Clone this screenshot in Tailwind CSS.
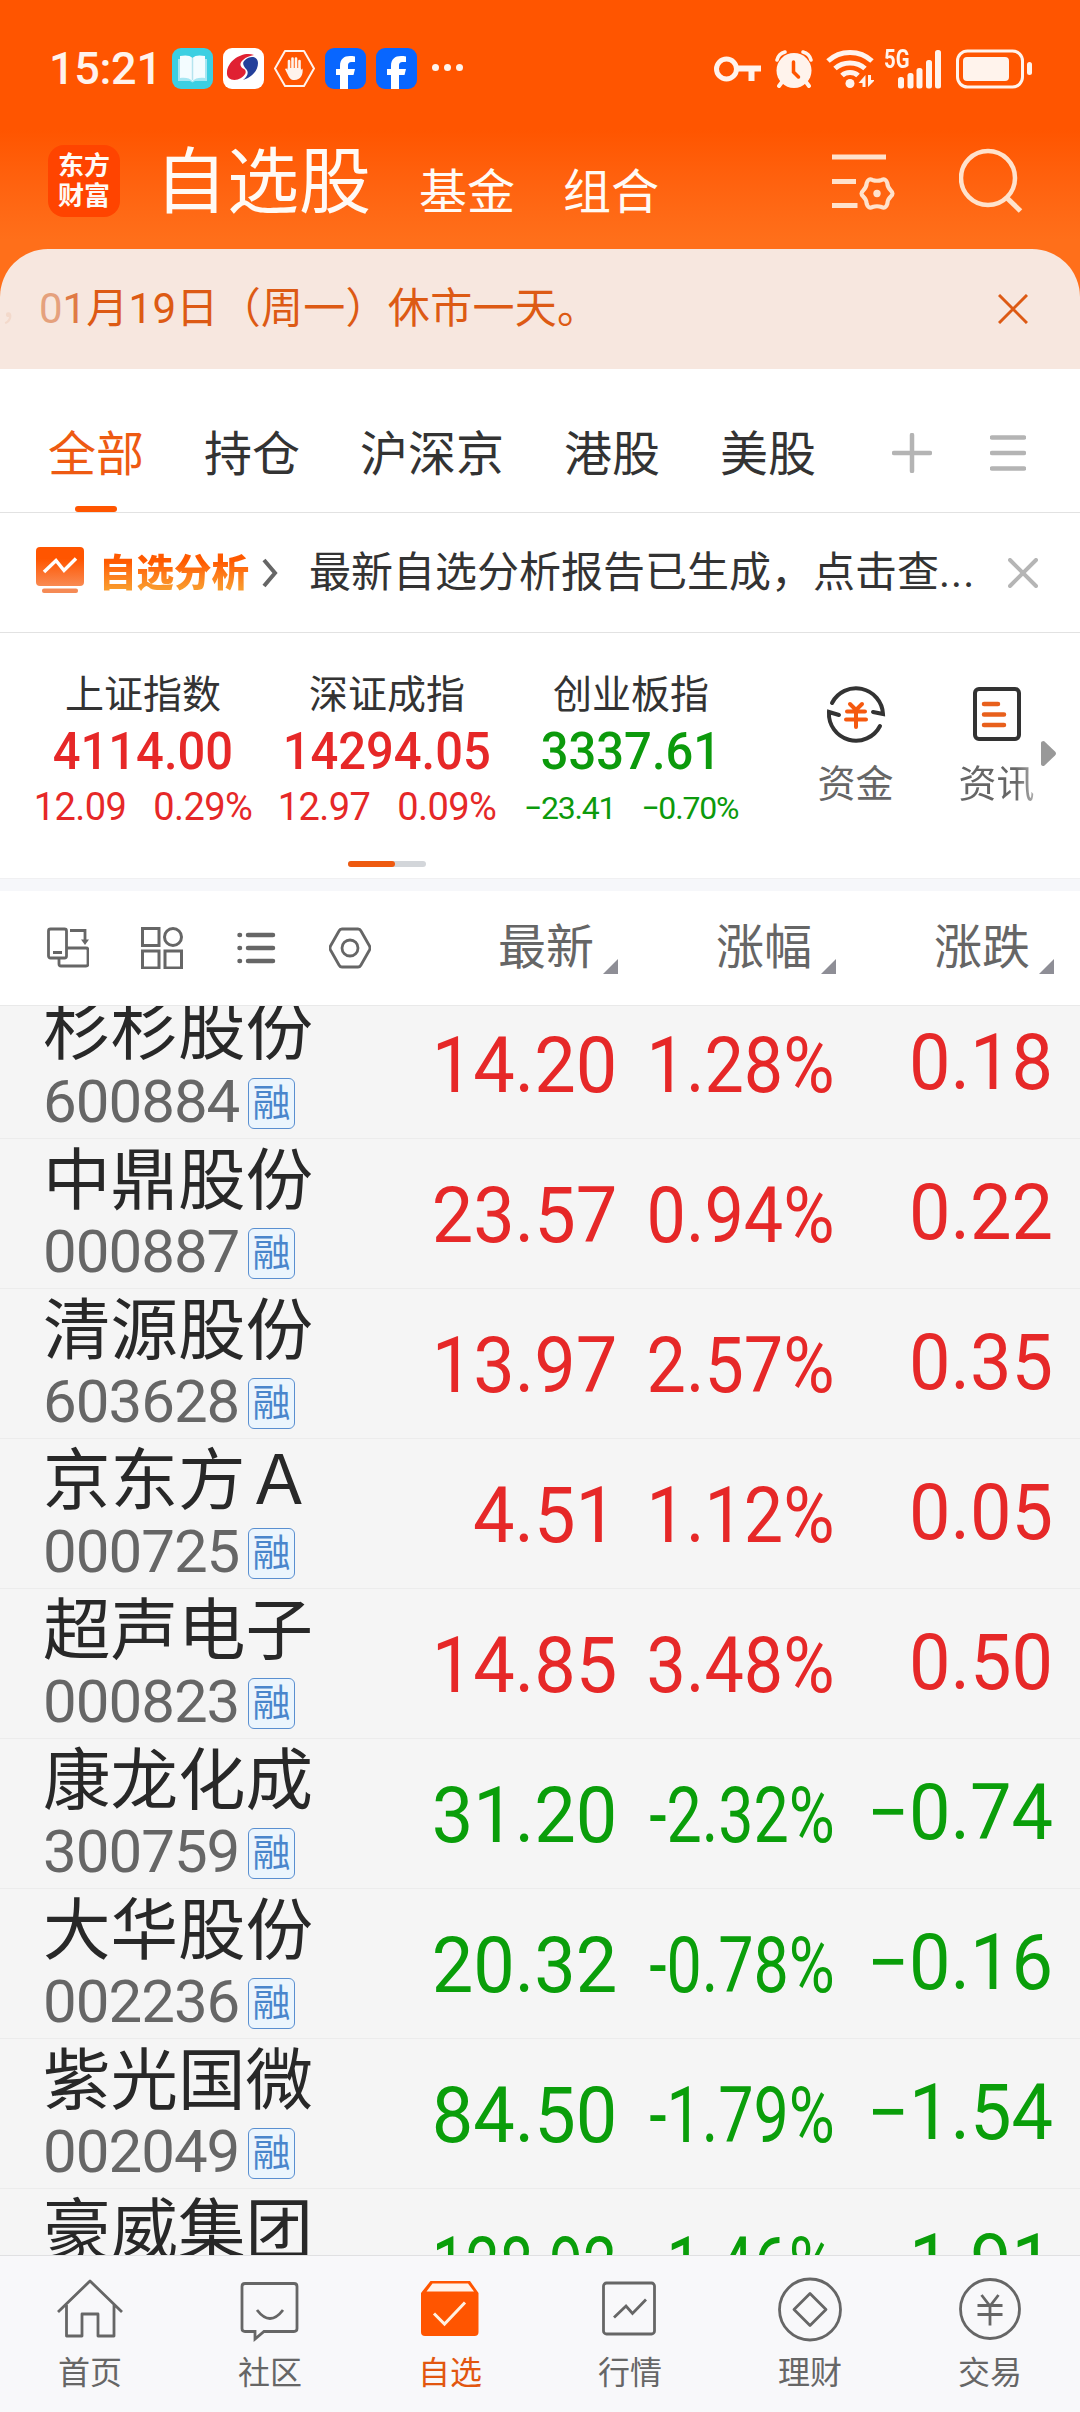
<!DOCTYPE html>
<html lang="zh-CN">
<head>
    <meta charset="UTF-8">
    <meta name="viewport" content="width=device-width, initial-scale=1.0">
    <title>自选股 | 东方财富</title>
    <script src="https://cdn.jsdelivr.net/npm/@tailwindcss/browser@4"></script>
</head>
<body class="w-[1080px] h-[2412px] overflow-hidden flex flex-col bg-white font-['Roboto','Noto_Sans_CJK_SC',sans-serif] text-[#333333] whitespace-nowrap">
    <!-- Header -->
    <header class="shrink-0 bg-linear-to-b from-[#ff5500] from-[130px] to-[#ff6f1a] to-[240px]">
        <!-- Status Bar -->
        <div class="h-[137px] flex items-center text-[#fff3ec]">
            <div class="w-[172px] pl-[49px] text-[45px] leading-none font-medium tracking-[-0.3px]">15:21</div>
            <div class="flex items-center gap-[10px]">
                <svg class="w-[41px] h-[41px]" viewBox="0 0 41 41">
                    <rect width="41" height="41" rx="9" fill="#3ccfe2"/>
                    <path d="M6 11h29v22H23l-2.500 1.500L18 33H6z" fill="#a5e6f2"/>
                    <path d="M8 8c5-1 10-1 12.500 2C23 7 28 7 33 8v22c-5-1-10 0-12.500 3C18 30 13 29 8 30z" fill="#f3fcff"/>
                    <path d="M20.500 10v22" stroke="#b5e4ef" stroke-width="1.500"/>
                </svg>
                <svg class="w-[41px] h-[41px]" viewBox="0 0 41 41">
                    <rect width="41" height="41" rx="9" fill="#fff"/>
                    <path d="M31 7C20 3 5 12 4 24c-1 8 8 10 14 6 5-3 6-7 3-9-4-2-5-6-1-9 3-3 7-4 11-5z" fill="#e02132"/>
                    <path d="M22 12c5-5 13-4 13 3 0 8-7 15-15 17 5-4 6-8 3-11-3-4-4-6-1-9z" fill="#24409a"/>
                </svg>
                <svg class="w-[41px] h-[41px]" viewBox="0 0 41 41" fill="none" stroke="currentColor" stroke-linecap="round">
                    <path d="M11 3h19l10 17.500L30 38H11L1 20.500z" stroke-width="2" stroke-linejoin="round"/>
                    <path d="M15 23V13M18.500 21V10.500M22 21V10.500M25.500 23V13" stroke-width="2.600"/>
                    <path d="M13.700 20h13.100v2l1.700-1.500c1 6-2 11.500-8 11.500-4 0-5-2-7-6l-2.500-5c1-1 2-.5 2.700 1z" fill="currentColor" stroke="none"/>
                </svg>
                <svg class="w-[41px] h-[41px]" viewBox="0 0 41 41">
                    <rect width="41" height="41" rx="9" fill="#0866ff"/>
                    <path d="M15 41V27h-4v-6h4v-3c0-7 4-10 10-10 2 0 3 0 5 .5V14h-3c-3 0-4 1-4 4v3h7l-1.500 6H23v14z" fill="#fff"/>
                </svg>
                <svg class="w-[41px] h-[41px]" viewBox="0 0 41 41">
                    <rect width="41" height="41" rx="9" fill="#0866ff"/>
                    <path d="M15 41V27h-4v-6h4v-3c0-7 4-10 10-10 2 0 3 0 5 .5V14h-3c-3 0-4 1-4 4v3h7l-1.500 6H23v14z" fill="#fff"/>
                </svg>
            </div>
            <div class="flex gap-[5px] ml-[15px] -mt-[2px]">
                <span class="w-[7px] h-[7px] rounded-full bg-current"></span>
                <span class="w-[7px] h-[7px] rounded-full bg-current"></span>
                <span class="w-[7px] h-[7px] rounded-full bg-current"></span>
            </div>
            <div class="flex items-center ml-auto pr-[47px]">
                <!-- key -->
                <svg class="w-[48px] h-[26px]" viewBox="0 0 48 26" fill="none" stroke="currentColor">
                    <circle cx="12.500" cy="13" r="10" stroke-width="5"/>
                    <path d="M23 12.500h24M37.500 13v12" stroke-width="6"/>
                </svg>
                <!-- alarm -->
                <svg class="w-[38px] h-[38px] ml-[13px]" viewBox="0 0 38 38" fill="none" stroke="currentColor" stroke-linecap="round">
                    <circle cx="19" cy="20.500" r="17.500" fill="currentColor" stroke="none"/>
                    <path d="M2 10c1-4 4-7 8-8M36 10c-1-4-4-7-8-8" stroke-width="3.500"/>
                    <path d="M7 32l-3 4M31 32l3 4" stroke-width="4"/>
                    <path d="M18.500 12v10l5 5" stroke="#ff5500" stroke-width="3.500"/>
                </svg>
                <!-- wifi -->
                <svg class="w-[48px] h-[40px] ml-[13px]" viewBox="0 0 48 40" fill="none" stroke="currentColor">
                    <path d="M2 12c12-11.500 32-11.500 44 0M9 19.500c8-7.500 22-7.500 30 0M16 26.500c4-4 12-4 16 0" stroke-width="5"/>
                    <circle cx="24" cy="34.500" r="4.500" fill="currentColor" stroke="none"/>
                    <path d="M39.500 38V26l-7 8h4v4zM42 26v12l7-7h-4v-5z" fill="currentColor" stroke="none"/>
                </svg>
                <!-- signal -->
                <div class="relative w-[58px] h-[40px] ml-[10px]">
                    <span class="absolute left-0 top-0 text-[26px] leading-[20px] font-bold origin-left scale-x-[.78]">5G</span>
                    <svg class="w-[58px] h-[40px]" viewBox="0 0 58 40" fill="currentColor">
                        <rect x="14" y="28" width="6" height="11.500" rx="2.500"/>
                        <rect x="23.500" y="24" width="6" height="15.500" rx="2.500"/>
                        <rect x="32.500" y="19" width="6" height="20.500" rx="2.500"/>
                        <rect x="42" y="11" width="6" height="28.500" rx="2.500"/>
                        <rect x="51" y="1" width="6" height="38.500" rx="2.500"/>
                    </svg>
                </div>
                <!-- battery -->
                <svg class="w-[77px] h-[40px] ml-[14px]" viewBox="0 0 77 40" fill="currentColor">
                    <rect x="1.500" y="2" width="65" height="36" rx="10" fill="none" stroke="currentColor" stroke-width="3"/>
                    <rect x="7" y="8" width="46" height="24" rx="4"/>
                    <rect x="71" y="13" width="5" height="13" rx="2.500"/>
                </svg>
            </div>
        </div>

        <!-- Title Bar -->
        <div class="h-[112px] pb-[24px] pl-[48px] pr-[57px] flex items-center text-[#fffaf5]">
            <div class="w-[72px] h-[72px] rounded-[16px] bg-[#ff4400] flex flex-col items-center justify-center text-[26px] leading-[30px] font-bold">
                <span>东方</span>
                <span>财富</span>
            </div>
            <h1 class="ml-[35px] mt-[4px] text-[72px] leading-[80px]">自选股</h1>
            <a href="#" class="ml-[48px] mt-[24px] text-[48px] leading-[56px]">基金</a>
            <a href="#" class="ml-[48px] mt-[24px] text-[48px] leading-[56px]">组合</a>
            <svg class="w-[64px] h-[60px] ml-auto text-[#ffe2cc]" viewBox="0 0 64 60" fill="none" stroke="currentColor" stroke-width="5">
                <path d="M0 6h54M0 30.500h24M0 54.500h25.500"/>
                <g transform="translate(45 42.500) scale(.92)">
                    <path d="M15.200 3Q11.400 6.600 11.200 11.200Q9.500 16.800 5 14.700Q0 13-5 14.700Q-9.500 16.800-11.200 11.200Q-11.400 6.600-15.200 3Q-18.500 0-15.200-3Q-11.400-6.600-11.200-11.200Q-9.500-16.800-5-14.700Q0-13 5-14.700Q9.500-16.800 11.200-11.200Q11.400-6.600 15.200-3Q18.500 0 15.200 3z" stroke-width="4.500"/>
                    <circle r="4" fill="currentColor" stroke="none"/>
                </g>
            </svg>
            <svg class="w-[64px] h-[66px] ml-[63px] text-[#ffe2cc]" viewBox="0 0 64 66" fill="none" stroke="currentColor" stroke-width="4.500">
                <circle cx="29" cy="30" r="27"/>
                <path d="M47.500 49.500l14 13.500" stroke-width="5"/>
            </svg>
        </div>

        <!-- Notice -->
        <div class="h-[120px] rounded-t-[48px] bg-[#f7e7df] flex items-center pr-[52px] text-[#dd5a14]">
            <div class="w-[39px] text-[42px] leading-[48px] text-[#f3d9cb] flex overflow-hidden"><span class="-ml-[4px] scale-[.8]">，</span></div>
            <p class="text-[42px] leading-[48px] -mt-[1px]"><span class="text-[#e5a17d]">0</span><span class="text-[#e07a45]">1</span><span class="tracking-[0.3px]">月19日（周一）休市一天。</span></p>
            <svg class="w-[30px] h-[30px] ml-auto" viewBox="0 0 30 30" stroke="currentColor" stroke-width="3">
                <path d="M1 1l28 28M29 1L1 29"/>
            </svg>
        </div>
    </header>

    <!-- Group Tabs -->
    <nav class="shrink-0 h-[144px] border-b border-[#e2e2e2] flex pl-[48px] pr-[54px] text-[48px] leading-[56px]">
        <ul class="flex gap-[60px]">
            <li class="relative pt-[58px] text-[#ee5a12]">全部
                <span class="absolute left-[27px] bottom-0 w-[42px] h-[6px] rounded-full bg-[#ff5500]"></span>
            </li>
            <li class="pt-[58px]">持仓</li>
            <li class="pt-[58px]">沪深京</li>
            <li class="pt-[58px]">港股</li>
            <li class="pt-[58px]">美股</li>
        </ul>
        <div class="flex items-center ml-auto pt-[24px] gap-[58px] text-[#b4b4b4]">
            <svg class="w-[40px] h-[40px]" viewBox="0 0 40 40" fill="none" stroke="currentColor" stroke-width="4.500" stroke-linecap="round">
                <path d="M20 2v36M2 20h36"/>
            </svg>
            <svg class="w-[36px] h-[40px]" viewBox="0 0 36 40" fill="none" stroke="currentColor" stroke-width="4.500" stroke-linecap="round">
                <path d="M2 4.500h32M2 20h32M2 35.500h32"/>
            </svg>
        </div>
    </nav>

    <!-- Analysis Banner -->
    <section class="shrink-0 h-[120px] border-b border-[#e2e2e2] flex items-center pl-[36px] pr-[42px]">
        <svg class="w-[48px] h-[48px] -mt-[6px]" viewBox="0 0 48 48">
            <defs>
                <linearGradient id="chart" x1="0" y1="0" x2="0" y2="1">
                    <stop offset=".3" stop-color="#ff5500"/>
                    <stop offset="1" stop-color="#f98a52"/>
                </linearGradient>
            </defs>
            <rect width="48" height="39" rx="4" y="1" fill="url(#chart)"/>
            <rect x="6" y="42.500" width="36" height="4.500" rx="2" fill="#f58a55"/>
            <path d="M8 26L20 14.500l8 10L40 12.500" fill="none" stroke="#fff" stroke-width="3.500"/>
        </svg>
        <b class="ml-[15px] text-[37.5px] leading-[44px] font-black bg-linear-to-b from-[#ff5a00] from-25% to-[#f99a2c] to-85% bg-clip-text text-transparent">自选分析</b>
        <svg class="w-[18px] h-[30px] ml-[12px]" viewBox="0 0 18 30" fill="none" stroke="#666" stroke-width="4">
            <path d="M3 2l11 13L3 28"/>
        </svg>
        <p class="ml-[30px] text-[42px] leading-[50px]">最新自选分析报告已生成，点击查<span class="tracking-[1px]">...</span></p>
        <svg class="w-[30px] h-[30px] ml-auto" viewBox="0 0 30 30" stroke="#b5b5b5" stroke-width="4" stroke-linecap="round">
            <path d="M2 2l26 26M28 2L2 28"/>
        </svg>
    </section>

    <!-- Index Quotes -->
    <section class="relative shrink-0 h-[246px] flex pl-[21px] border-b border-[#f0f0f2]">
        <div class="w-[244px] pt-[36px] flex flex-col items-center text-[#e62828]">
            <h2 class="text-[39px] leading-[52px] text-[#333333]">上证指数</h2>
            <div class="mt-[3px] text-[52px] leading-[56px] font-medium scale-x-[.94]">4114.00</div>
            <div class="mt-[7px] flex gap-[27px] text-[38px] leading-[40px] tracking-[-0.6px]"><span>12.09</span><span>0.29%</span></div>
        </div>
        <div class="w-[244px] pt-[36px] flex flex-col items-center text-[#e62828]">
            <h2 class="text-[39px] leading-[52px] text-[#333333]">深证成指</h2>
            <div class="mt-[3px] text-[52px] leading-[56px] font-medium scale-x-[.94]">14294.05</div>
            <div class="mt-[7px] flex gap-[27px] text-[38px] leading-[40px] tracking-[-0.6px]"><span>12.97</span><span>0.09%</span></div>
        </div>
        <div class="w-[244px] pt-[36px] flex flex-col items-center text-[#0c9a0c]">
            <h2 class="text-[39px] leading-[52px] text-[#333333]">创业板指</h2>
            <div class="mt-[3px] text-[52px] leading-[56px] font-medium scale-x-[.94]">3337.61</div>
            <div class="mt-[8px] flex gap-[26px] text-[32px] leading-[40px] tracking-[-1.2px]"><span>−23.41</span><span>−0.70%</span></div>
        </div>
        <div class="w-[141px] ml-[32px] pt-[50px] flex flex-col items-center text-[#666666]">
            <svg class="w-[60px] h-[62px]" viewBox="0 0 60 62" fill="none" stroke="#333" stroke-width="4" stroke-linecap="round">
                <path d="M6 20A27 27 0 0 1 57 31l-10-2M54 43A27 27 0 0 1 3 29l10 3"/>
                <path d="M24 21l6 6 6-6M21 28.500h18M20 36.500h20M30 28v16" stroke="#f5590f"/>
            </svg>
            <span class="mt-[15px] text-[38px] leading-[48px]">资金</span>
        </div>
        <div class="w-[141px] pt-[50px] flex flex-col items-center">
            <svg class="w-[60px] h-[62px]" viewBox="0 0 60 62" fill="none" stroke="#333" stroke-width="4">
                <rect x="8" y="6" width="44" height="50" rx="4"/>
                <path d="M17 21h14M17 31.500h20M17 42h20" stroke="#e8601c" stroke-width="4.500" stroke-linecap="round"/>
            </svg>
            <span class="mt-[15px] text-[38px] leading-[48px] bg-linear-to-r from-[#666666] from-75% to-[#b0b0b0] bg-clip-text text-transparent">资讯</span>
        </div>
        <svg class="absolute left-[1041px] top-[108px] w-[15px] h-[25px]" viewBox="0 0 15 25" fill="#999">
            <path d="M0 2q0-2 3-2l11 10.500q2 2 0 4L3 25q-3 0-3-2z"/>
        </svg>
        <div class="absolute left-[348px] top-[228px] w-[78px] h-[6px] rounded-full bg-[#d3d6da]">
            <div class="w-[47px] h-[6px] rounded-full bg-[#ee5a10]"></div>
        </div>
    </section>
    <div class="shrink-0 h-[12px] bg-[#f6f7fa]"></div>

    <!-- List Header -->
    <section class="shrink-0 h-[115px] border-b border-[#e9e9e9] flex items-center text-[#666666]">
        <div class="w-[378px] pl-[47px] flex gap-[52px]">
            <svg class="w-[42px] h-[42px]" viewBox="0 0 42 42" fill="none" stroke="currentColor" stroke-width="2.800">
                <rect x="1.500" y="2" width="18" height="29" rx="2"/>
                <path d="M6 25.500h9M23 3.500h15V15M20 21h19q2 0 2 2v14q0 2-2 2H14q-2 0-2-2v-6"/>
                <path d="M34 12.500h8l-4 5.500z" fill="currentColor" stroke="none"/>
            </svg>
            <svg class="w-[42px] h-[42px]" viewBox="0 0 42 42" fill="none" stroke="currentColor" stroke-width="3">
                <rect x="1.500" y="1.500" width="16.500" height="17"/>
                <circle cx="32" cy="10" r="8.500"/>
                <rect x="1.500" y="24" width="16.500" height="17"/>
                <rect x="24" y="24" width="16.500" height="17"/>
            </svg>
            <svg class="w-[42px] h-[42px]" viewBox="0 0 42 42" fill="none" stroke="currentColor" stroke-width="4.500" stroke-linecap="round">
                <path d="M13 8h25M13 21h25M13 34h25M4.500 8h.5M4.500 21h.5M4.500 34h.5"/>
            </svg>
            <svg class="w-[42px] h-[42px]" viewBox="0 0 42 42" fill="none" stroke="currentColor" stroke-width="2.800">
                <path d="M13 2h16q2 0 3 2l8.500 15q1 2 0 4L32 38q-1 2-3 2H13q-2 0-3-2L1.500 23q-1-2 0-4L10 4q1-2 3-2z"/>
                <circle cx="21" cy="21" r="8"/>
            </svg>
        </div>
        <div class="w-[240px] flex justify-end items-end text-[48px] leading-[56px]">最新
            <svg class="w-[15px] h-[15px] ml-[9px] mb-[2px]" viewBox="0 0 15 15" fill="#8e8e96"><path d="M15 0v15H0z"/></svg>
        </div>
        <div class="w-[218px] flex justify-end items-end text-[48px] leading-[56px]">涨幅
            <svg class="w-[15px] h-[15px] ml-[9px] mb-[2px]" viewBox="0 0 15 15" fill="#8e8e96"><path d="M15 0v15H0z"/></svg>
        </div>
        <div class="w-[218px] flex justify-end items-end text-[48px] leading-[56px]">涨跌
            <svg class="w-[15px] h-[15px] ml-[9px] mb-[2px]" viewBox="0 0 15 15" fill="#8e8e96"><path d="M15 0v15H0z"/></svg>
        </div>
    </section>

    <!-- Stock List -->
    <main class="flex-1 min-h-0 overflow-hidden bg-[#f5f5f5]">
        <div id="stockList" class="-mt-[17px]"></div>
    </main>

    <!-- Bottom Navigation -->
    <footer class="shrink-0 h-[157px] border-t border-[#e0e0e2] bg-[#f8f8fa] grid grid-cols-6 text-[32px] leading-[40px] text-[#666666]">
        <a href="#" class="flex flex-col items-center pt-[20px]">
            <svg class="w-[66px] h-[66px]" viewBox="0 0 66 66" fill="none" stroke="currentColor" stroke-width="2.800">
                <path d="M1 36L33 5l32 31M9.500 29v31H25V38h16v22h16V29" stroke-linejoin="round"/>
            </svg>
            <span class="mt-[11px]">首页</span>
        </a>
        <a href="#" class="flex flex-col items-center pt-[20px]">
            <svg class="w-[66px] h-[66px]" viewBox="0 0 66 66" fill="none" stroke="currentColor" stroke-width="2.800">
                <path d="M8 7.500h49q3 0 3 3v42q0 3-3 3H27l-9 7.500v-7.500H8q-3 0-3-3v-42q0-3 3-3z"/>
                <path d="M20 34q13 17 26 0"/>
            </svg>
            <span class="mt-[11px]">社区</span>
        </a>
        <a href="#" class="flex flex-col items-center pt-[20px] text-[#e2560f]">
            <svg class="w-[66px] h-[66px]" viewBox="0 0 66 66">
                <path d="M4 17l9.500-12H53l8.500 12v39q0 4-4 4H8q-4 0-4-4z" fill="#ff5500"/>
                <path d="M9.500 15.500L15.500 7.500H51l6 8z" fill="#fff3ea"/>
                <path d="M17 37.500l10.500 10.500L48 26.500" fill="none" stroke="#fff0e0" stroke-width="3"/>
            </svg>
            <span class="mt-[11px]">自选</span>
        </a>
        <a href="#" class="flex flex-col items-center pt-[20px]">
            <svg class="w-[66px] h-[66px]" viewBox="0 0 66 66" fill="none" stroke="currentColor" stroke-width="2.800">
                <rect x="6.500" y="7" width="51" height="51" rx="3"/>
                <path d="M17 41.500L29 30l6.500 7.500L49 23.500"/>
            </svg>
            <span class="mt-[11px]">行情</span>
        </a>
        <a href="#" class="flex flex-col items-center pt-[20px]">
            <svg class="w-[66px] h-[66px]" viewBox="0 0 66 66" fill="none" stroke="currentColor" stroke-width="2.800">
                <circle cx="33" cy="33.500" r="30.500"/>
                <path d="M33 17.500l16 16-16 16-16-16z" stroke-linejoin="round"/>
            </svg>
            <span class="mt-[11px]">理财</span>
        </a>
        <a href="#" class="flex flex-col items-center pt-[20px]">
            <svg class="w-[66px] h-[66px]" viewBox="0 0 66 66" fill="none" stroke="currentColor" stroke-width="2.800">
                <circle cx="33" cy="33" r="29.500"/>
                <path d="M24.500 19l8.500 11 8.500-11M20.500 29.500h25M20.500 38.500h25M33 29v20.500"/>
            </svg>
            <span class="mt-[11px]">交易</span>
        </a>
    </footer>

    <script>
        const stocks = [
            { name: '杉杉股份', code: '600884', price: '14.20', percent: '1.28%', change: '0.18' },
            { name: '中鼎股份', code: '000887', price: '23.57', percent: '0.94%', change: '0.22' },
            { name: '清源股份', code: '603628', price: '13.97', percent: '2.57%', change: '0.35' },
            { name: '京东方Ａ', code: '000725', price: '4.51', percent: '1.12%', change: '0.05' },
            { name: '超声电子', code: '000823', price: '14.85', percent: '3.48%', change: '0.50' },
            { name: '康龙化成', code: '300759', price: '31.20', percent: '-2.32%', change: '−0.74' },
            { name: '大华股份', code: '002236', price: '20.32', percent: '-0.78%', change: '−0.16' },
            { name: '紫光国微', code: '002049', price: '84.50', percent: '-1.79%', change: '−1.54' },
            { name: '豪威集团', code: '603501', price: '128.92', percent: '-1.46%', change: '−1.91' }
        ];

        document.getElementById('stockList').innerHTML = stocks.map(stock => {
            const falling = stock.percent.startsWith('-');
            const color = falling ? 'text-[#0a9e0a]' : 'text-[#e62828]';
            // long values are squeezed to stay inside their column
            const priceScale = stock.price.length > 5 ? 'scale-x-[.78]' : 'scale-x-[.96]';
            const percentScale = falling ? 'scale-x-[.815]' : 'scale-x-[.91]';
            return `
                <div class="h-[150px] border-b border-[#ececec] flex items-center text-[77px] leading-[90px] ${color}">
                    <div class="w-[378px] h-full pl-[43px]">
                        <div class="h-[84px] text-[67.5px] leading-[83px] text-[#282828]">${stock.name}</div>
                        <div class="h-[58px] flex items-center text-[60px] leading-[58px] tracking-[-1px] text-[#666666]">
                            <span class="w-[205px] -mt-px">${stock.code}</span>
                            <span class="w-[47px] h-[51px] mt-[2px] border-[1.5px] border-[#5a8fd0] rounded-[6px] bg-[#ebf5fd] flex items-center justify-center text-[38px] leading-[48px] tracking-normal text-[#4a86cc]">融</span>
                        </div>
                    </div>
                    <div class="w-[239px] pt-[5px] flex justify-end"><span class="origin-right ${priceScale}">${stock.price}</span></div>
                    <div class="w-[218px] pt-[5px] flex justify-end"><span class="origin-right ${percentScale}">${stock.percent}</span></div>
                    <div class="w-[218px] pb-[2px] flex justify-end"><span class="origin-right scale-x-[.96]">${stock.change}</span></div>
                </div>`;
        }).join('');
    </script>
</body>
</html>
